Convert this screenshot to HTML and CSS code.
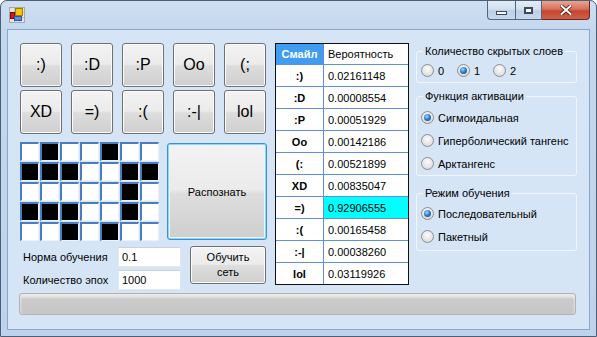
FILE: index.html
```html
<!DOCTYPE html>
<html lang="ru">
<head>
    <meta charset="UTF-8">
    <title>Распознавание смайлов</title>
    <link rel="stylesheet" href="styles.css">
</head>
<body>
    <div class="window">
        <div class="titlebar">
            <svg class="app-icon" width="16" height="16" viewBox="0 0 16 16">
                <rect x="0.5" y="0.5" width="15" height="15" fill="#e4e4e4" stroke="#a8a8a8"/>
                <path d="M5.5 1v14M10.5 1v14M1 5.5h14M1 10.5h14" stroke="#c4c4c4"/>
                <rect x="6.5" y="1.5" width="7" height="7" fill="#f6c400" stroke="#a87a00"/>
                <rect x="1.5" y="5.5" width="4" height="6" fill="#d21a1a" stroke="#7a0a0a"/>
                <rect x="5.5" y="9.5" width="7" height="4" fill="#5a8ee6" stroke="#2a56a8"/>
            </svg>
            <div class="caption-buttons">
                <div class="cap-btn cap-min"><span class="min-glyph"></span></div>
                <div class="cap-btn cap-max"><span class="max-glyph"></span></div>
                <div class="cap-btn cap-close">
                    <svg width="12" height="10" viewBox="0 0 12 10">
                        <path d="M1.5 1l9 8M10.5 1l-9 8" stroke="#4a1a10" stroke-width="3.6" stroke-linecap="square"/>
                        <path d="M1.5 1l9 8M10.5 1l-9 8" stroke="#ffffff" stroke-width="2" stroke-linecap="square"/>
                    </svg>
                </div>
            </div>
        </div>

        <div class="client">
            <div class="main">
                <div class="left-col">
                    <div class="emoji-grid">
                        <button class="btn">:)</button>
                        <button class="btn">:D</button>
                        <button class="btn">:P</button>
                        <button class="btn">Oo</button>
                        <button class="btn">(;</button>
                        <button class="btn">XD</button>
                        <button class="btn">=)</button>
                        <button class="btn">:(</button>
                        <button class="btn">:-|</button>
                        <button class="btn">lol</button>
                    </div>

                    <div class="draw-row">
                        <div class="pixels" id="pixels"></div>
                        <button class="btn btn-small btn-focus recognize">Распознать</button>
                    </div>

                    <div class="train-row">
                        <div class="fields">
                            <div class="field">
                                <span class="field-label">Норма обучения</span>
                                <input class="text-input" type="text" value="0.1">
                            </div>
                            <div class="field">
                                <span class="field-label">Количество эпох</span>
                                <input class="text-input" type="text" value="1000">
                            </div>
                        </div>
                        <button class="btn btn-small train">Обучить<br>сеть</button>
                    </div>
                </div>

                <div class="grid-table">
                    <div class="cell head head-sel">Смайл</div>
                    <div class="cell head head-val">Вероятность</div>
                    <div class="cell key">:)</div><div class="cell val">0.02161148</div>
                    <div class="cell key">:D</div><div class="cell val">0.00008554</div>
                    <div class="cell key">:P</div><div class="cell val">0.00051929</div>
                    <div class="cell key">Oo</div><div class="cell val">0.00142186</div>
                    <div class="cell key">(:</div><div class="cell val">0.00521899</div>
                    <div class="cell key">XD</div><div class="cell val">0.00835047</div>
                    <div class="cell key">=)</div><div class="cell val best">0.92906555</div>
                    <div class="cell key">:(</div><div class="cell val">0.00165458</div>
                    <div class="cell key">:-|</div><div class="cell val">0.00038260</div>
                    <div class="cell key">lol</div><div class="cell val">0.03119926</div>
                </div>

                <div class="right-col">
                    <fieldset class="group group-layers">
                        <legend>Количество скрытых слоев</legend>
                        <div class="radio-line">
                            <label class="radio-item short"><span class="radio"></span>0</label>
                            <label class="radio-item short"><span class="radio on"></span>1</label>
                            <label class="radio-item short"><span class="radio"></span>2</label>
                        </div>
                    </fieldset>

                    <fieldset class="group group-func">
                        <legend>Функция активации</legend>
                        <label class="radio-item"><span class="radio on"></span>Сигмоидальная</label>
                        <label class="radio-item"><span class="radio"></span>Гиперболический тангенс</label>
                        <label class="radio-item"><span class="radio"></span>Арктангенс</label>
                    </fieldset>

                    <fieldset class="group group-mode">
                        <legend>Режим обучения</legend>
                        <label class="radio-item"><span class="radio on"></span>Последовательный</label>
                        <label class="radio-item"><span class="radio"></span>Пакетный</label>
                    </fieldset>
                </div>
            </div>

            <div class="progress"></div>
        </div>
    </div>

    <script>
        // картинка 7x5, 1 = закрашенная клетка
        const pattern = [
            [0, 1, 0, 0, 1, 0, 0],
            [1, 1, 1, 0, 0, 1, 1],
            [0, 0, 0, 0, 0, 1, 0],
            [1, 1, 1, 0, 0, 1, 0],
            [0, 0, 1, 0, 1, 0, 0]
        ];

        const pixelsDiv = document.getElementById('pixels');
        pattern.forEach(row => {
            row.forEach(v => {
                const cell = document.createElement('div');
                cell.className = v ? 'pixel black' : 'pixel';
                pixelsDiv.appendChild(cell);
            });
        });
    </script>
</body>
</html>
```

FILE: styles.css
```css
html, body {
    margin: 0;
    padding: 0;
    background: #ffffff;
}

body {
    font-family: "Liberation Sans", Arial, sans-serif;
    font-size: 11px;
    color: #000;
    width: 597px;
    height: 337px;
    overflow: hidden;
}

.window {
    width: 597px;
    height: 337px;
    box-sizing: border-box;
    border: 1px solid #4d5f75;
    border-radius: 7px 7px 0 0;
    background: linear-gradient(to bottom, #cfdff2 0, #c3d7ee 30px, #bfd4ec 100%);
    display: flex;
    flex-direction: column;
}

/* заголовок окна */
.titlebar {
    height: 28px;
    display: flex;
    align-items: flex-start;
    justify-content: space-between;
    flex-shrink: 0;
}

.app-icon {
    margin: 6px 0 0 8px;
}

.caption-buttons {
    display: flex;
    margin-right: 6px;
}

.cap-btn {
    height: 19px;
    box-sizing: border-box;
    border: 1px solid #54667e;
    border-top: none;
    display: flex;
    align-items: center;
    justify-content: center;
    background: linear-gradient(to bottom, #e3ecf7 0, #d2e0f1 45%, #bccfe8 55%, #c8d9ee 100%);
}

.cap-min {
    width: 28px;
    border-radius: 0 0 0 4px;
    border-right: none;
}

.cap-max {
    width: 27px;
}

.cap-close {
    width: 48px;
    border-left: none;
    border-radius: 0 0 4px 0;
    border-color: #6a2a20;
    background: linear-gradient(to bottom, #e8a493 0, #d7705c 45%, #c4462e 55%, #d0604a 100%);
}

.min-glyph {
    width: 9px;
    height: 2px;
    margin-top: 6px;
    background: #fff;
    border: 1px solid #3c4a5c;
}

.max-glyph {
    width: 7px;
    height: 5px;
    background: #fff;
    border: 1px solid #3c4a5c;
    box-shadow: inset 0 0 0 1px #3c4a5c, inset 0 0 0 2px #fff;
}

/* рабочая область */
.client {
    margin: 0 6px 6px 6px;
    flex: 1;
    border: 1px solid #8aa6c8;
    background: #d6e5f6;
    padding: 13px 12px 0 12px;
    display: flex;
    flex-direction: column;
}

.main {
    display: flex;
    align-items: flex-start;
}

.left-col {
    width: 247px;
    display: flex;
    flex-direction: column;
}

.btn {
    font-family: "Liberation Sans", Arial, sans-serif;
    font-size: 16px;
    color: #000;
    padding: 0;
    border: 1px solid #707070;
    border-radius: 3px;
    background: linear-gradient(to bottom, #f3f3f3 0, #ebebeb 48%, #dddddd 52%, #cfcfcf 100%);
    box-shadow: inset 0 0 0 1px #fbfbfb;
    cursor: pointer;
}

.btn-small {
    font-size: 11px;
}

.btn-focus {
    border-color: #3c8fd0;
    box-shadow: inset 0 0 0 1px #8ed6f6, inset 0 0 0 2px #e8f6fd;
}

.emoji-grid {
    display: grid;
    grid-template-columns: repeat(5, 42px);
    grid-auto-rows: 44px;
    column-gap: 9px;
    row-gap: 3px;
}

.draw-row {
    display: flex;
    align-items: flex-start;
    margin-top: 8px;
}

.pixels {
    display: grid;
    grid-template-columns: repeat(7, 19px);
    grid-auto-rows: 19px;
    gap: 1px;
}

.pixel {
    box-sizing: border-box;
    background: #ffffff;
    border-left: 2px solid #4a7cc0;
    border-top: 2px solid #4a7cc0;
    border-right: 1px solid #eaf1fa;
    border-bottom: 1px solid #eaf1fa;
}

.pixel.black {
    background: #000000;
}

.recognize {
    width: 100px;
    height: 97px;
    margin-left: 8px;
    margin-top: 1px;
}

.train-row {
    display: flex;
    align-items: flex-start;
    margin-top: 5px;
}

.fields {
    display: flex;
    flex-direction: column;
    gap: 3px;
    margin-top: 1px;
}

.field {
    display: flex;
    align-items: center;
}

.field-label {
    width: 95px;
    padding-left: 3px;
}

.text-input {
    width: 63px;
    height: 20px;
    box-sizing: border-box;
    border: 1px solid #e2e8ef;
    border-top-color: #c9d2dc;
    background: #fff;
    font-family: "Liberation Sans", Arial, sans-serif;
    font-size: 11px;
    padding: 0 3px;
    color: #000;
}

.train {
    width: 76px;
    height: 38px;
    margin-left: 9px;
    line-height: 15px;
}

/* таблица вероятностей */
.grid-table {
    margin-left: 8px;
    display: grid;
    grid-template-columns: 47px 84px;
    grid-template-rows: 20px repeat(10, 21px);
    gap: 1px;
    background: #5f90dc;
    border: 1px solid #111;
}

.cell {
    background: #fff;
    display: flex;
    align-items: center;
}

.head-sel {
    background: #3f9cf0;
    color: #fff;
    font-weight: bold;
    justify-content: center;
}

.head-val {
    padding-left: 4px;
}

.key {
    justify-content: center;
    font-weight: bold;
}

.val {
    padding-left: 4px;
}

.val.best {
    background: #00ffff;
}

/* настройки справа */
.right-col {
    margin-left: 7px;
    margin-top: 2px;
    width: 161px;
    display: flex;
    flex-direction: column;
}

.group {
    margin: 0;
    padding: 0 4px;
    border: 1px solid #f2f6fb;
    border-radius: 3px;
}

.group legend {
    padding: 0 2px;
    margin-left: 2px;
    line-height: 13px;
}

.group-layers {
    padding-top: 1px;
    padding-bottom: 0;
}

.group-func {
    margin-top: 7px;
    padding-top: 3px;
}

.group-mode {
    margin-top: 11px;
    padding-top: 2px;
    padding-bottom: 2px;
}

.radio-line {
    display: flex;
}

.radio-item {
    height: 23px;
    display: flex;
    align-items: center;
    gap: 4px;
}

.radio-item.short {
    width: 36px;
}

.radio {
    width: 13px;
    height: 13px;
    box-sizing: border-box;
    border-radius: 50%;
    border: 1px solid #8c8e90;
    background: radial-gradient(circle at 50% 35%, #fbfbfb 0, #e6e6e6 55%, #cfd0d1 100%);
    display: flex;
    align-items: center;
    justify-content: center;
    flex-shrink: 0;
}

.radio.on::after {
    content: '';
    width: 7px;
    height: 7px;
    border-radius: 50%;
    background: radial-gradient(circle at 40% 35%, #a6dcff 0, #2f7fd0 45%, #0d3f82 100%);
}

.progress {
    margin-top: 3px;
    margin-left: -1px;
    width: 557px;
    height: 22px;
    box-sizing: border-box;
    border: 1px solid #b2b2b2;
    border-radius: 3px;
    background: linear-gradient(to bottom, #ececec 0, #e2e2e2 3px, #cbcbcb 5px, #c6c6c6 100%);
    box-shadow: inset 2px 0 2px -1px #e4e4e4, inset -2px 0 2px -1px #e4e4e4;
}
```
